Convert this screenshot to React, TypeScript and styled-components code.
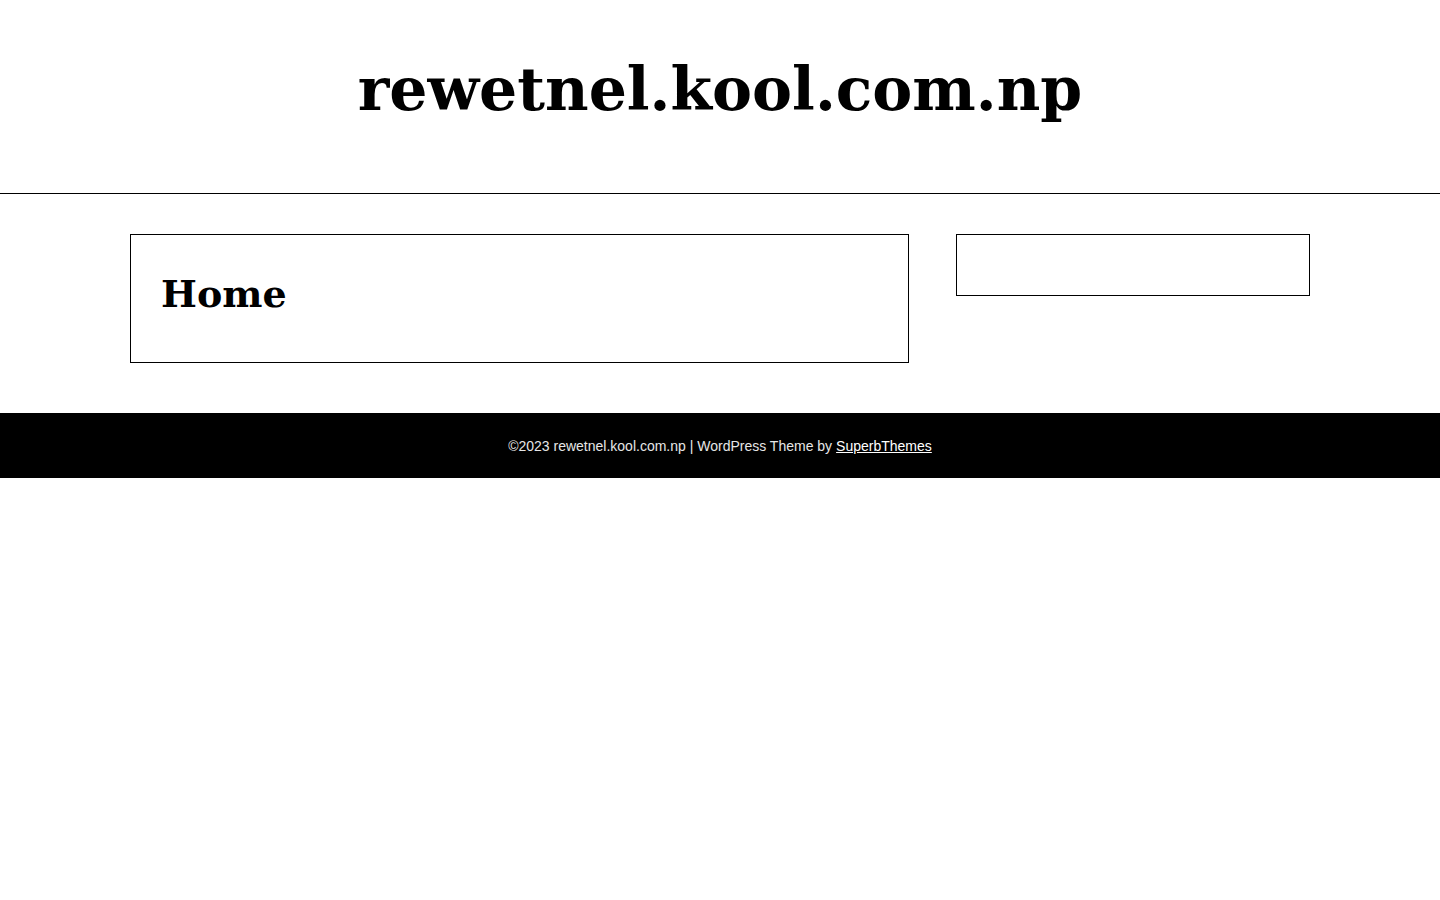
import * as React from "react";
import styled, { createGlobalStyle } from "styled-components";

const GlobalStyle = createGlobalStyle`
  body {
    margin: 0;
    background: #fff;
    color: #000;
    font-family: "Liberation Sans", Arial, sans-serif;
  }
`;

const Header = styled.header`
  height: 194px;
  border-bottom: 1px solid #000;
  display: flex;
  justify-content: center;
  padding-top: 53px;
  box-sizing: border-box;
`;

const SiteTitle = styled.h1`
  margin: 0;
  font-family: "DejaVu Serif", serif;
  font-weight: bold;
  font-size: 60px;
  line-height: 72px;
`;

const Main = styled.main`
  width: 1180px;
  margin: 0 auto;
  padding: 40px 0 50px;
  display: flex;
  justify-content: space-between;
  align-items: flex-start;
`;

const Card = styled.div<{ $width: number; $height: number }>`
  width: ${(p) => p.$width}px;
  height: ${(p) => p.$height}px;
  box-sizing: border-box;
  border: 1px solid #000;
  padding: 30px;
`;

const PageTitle = styled.h2`
  margin: 0;
  font-family: "DejaVu Serif", serif;
  font-weight: bold;
  font-size: 38px;
  line-height: 58px;
`;

const Footer = styled.footer`
  background: #000;
  height: 65px;
  display: flex;
  align-items: center;
  justify-content: center;
  color: #e6e6e6;
  font-size: 14px;
  padding-top: 1px;
  box-sizing: border-box;
`;

const FooterLink = styled.a`
  color: #fff;
  text-decoration: underline;
  margin-left: 4px;
`;

const App = () => {
  return (
    <>
      <GlobalStyle />
      <Header>
        <SiteTitle>rewetnel.kool.com.np</SiteTitle>
      </Header>
      <Main>
        <Card $width={779} $height={129}>
          <PageTitle>Home</PageTitle>
        </Card>
        <Card $width={354} $height={62} />
      </Main>
      <Footer>
        ©2023 rewetnel.kool.com.np | WordPress Theme by
        <FooterLink href="#">SuperbThemes</FooterLink>
      </Footer>
    </>
  );
};

export default App;
